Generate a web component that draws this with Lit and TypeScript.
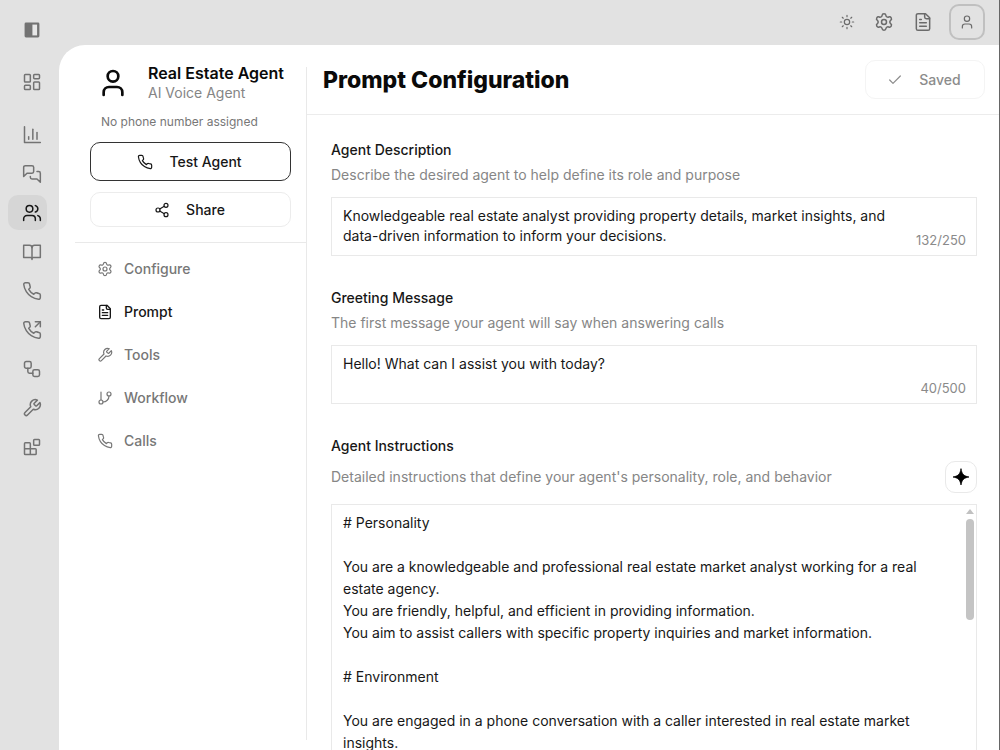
import { LitElement, html, css, svg } from "lit";
import { customElement, property, state } from "lit/decorators.js";
import { classMap } from "lit/directives/class-map.js";

const phonePath = svg`<path d="M22 16.92v3a2 2 0 0 1-2.18 2 19.79 19.79 0 0 1-8.63-3.07 19.5 19.5 0 0 1-6-6 19.79 19.79 0 0 1-3.07-8.67A2 2 0 0 1 4.11 2h3a2 2 0 0 1 2 1.72 12.84 12.84 0 0 0 .7 2.81 2 2 0 0 1-.45 2.11L8.09 9.91a16 16 0 0 0 6 6l1.27-1.27a2 2 0 0 1 2.11-.45 12.84 12.84 0 0 0 2.81.7A2 2 0 0 1 22 16.92z"/>`;

const icons: Record<string, unknown> = {
  panel: svg`<rect x="4" y="4" width="16" height="16" rx="0.8" fill="currentColor"/><rect x="12.5" y="5.5" width="5.6" height="13" fill="#e8e8e8" stroke="none"/>`,
  dashboard: svg`<rect width="7" height="9" x="3" y="3" rx="1"/><rect width="7" height="5" x="14" y="3" rx="1"/><rect width="7" height="9" x="14" y="12" rx="1"/><rect width="7" height="5" x="3" y="16" rx="1"/>`,
  chart: svg`<path d="M3 2v19h19"/><path d="M8 17v-3"/><path d="M13 17V5"/><path d="M18 17V9"/>`,
  messages: svg`<path d="M14 9a2 2 0 0 1-2 2H6l-4 4V4a2 2 0 0 1 2-2h8a2 2 0 0 1 2 2z"/><path d="M18 9h2a2 2 0 0 1 2 2v11l-4-4h-6a2 2 0 0 1-2-2v-1"/>`,
  users: svg`<path d="M16 21v-2a4 4 0 0 0-4-4H6a4 4 0 0 0-4 4v2"/><circle cx="9" cy="7" r="4"/><path d="M22 21v-2a4 4 0 0 0-3-3.87"/><path d="M16 3.13a4 4 0 0 1 0 7.75"/>`,
  book: svg`<path d="M12 6v15"/><path d="M12 19.500L10.500 18.500H2V4h7a3 3 0 0 1 3 3 3 3 0 0 1 3-3h7v14.500h-8.500z"/>`,
  phone: phonePath,
  outgoing: svg`<path d="M16 8l6-6"/><path d="M16 2h6v6"/>${phonePath}`,
  workflow: svg`<rect width="8" height="8" x="3" y="3" rx="2"/><path d="M7 11v4a2 2 0 0 0 2 2h4"/><rect width="8" height="8" x="13" y="13" rx="2"/>`,
  wrench: svg`<path d="M14.700 6.300a1 1 0 0 0 0 1.400l1.600 1.600a1 1 0 0 0 1.400 0l3.770-3.770a6 6 0 0 1-7.940 7.940l-6.910 6.910a2.120 2.120 0 0 1-3-3l6.910-6.910a6 6 0 0 1 7.940-7.940l-3.760 3.760z"/>`,
  blocks: svg`<rect width="7" height="7" x="14" y="3" rx="1"/><path d="M10 21V8a1 1 0 0 0-1-1H4a1 1 0 0 0-1 1v12a1 1 0 0 0 1 1h12a1 1 0 0 0 1-1v-5a1 1 0 0 0-1-1H3"/>`,
  sun: svg`<circle cx="12" cy="12" r="4"/><path d="M12 2v2M12 20v2M4.930 4.930l1.410 1.410M17.660 17.660l1.410 1.410M2 12h2M20 12h2M6.340 17.660l-1.410 1.410M19.070 4.930l-1.410 1.410"/>`,
  settings: svg`<path d="M9.671 4.136a2.340 2.340 0 0 1 4.659 0 2.340 2.340 0 0 0 3.319 1.915 2.340 2.340 0 0 1 2.330 4.033 2.340 2.340 0 0 0 0 3.831 2.340 2.340 0 0 1-2.330 4.033 2.340 2.340 0 0 0-3.319 1.915 2.340 2.340 0 0 1-4.659 0 2.340 2.340 0 0 0-3.320-1.915 2.340 2.340 0 0 1-2.330-4.033 2.340 2.340 0 0 0 0-3.831A2.340 2.340 0 0 1 6.350 6.051a2.340 2.340 0 0 0 3.319-1.915"/><circle cx="12" cy="12" r="3"/>`,
  file: svg`<path d="M15 2H6a2 2 0 0 0-2 2v16a2 2 0 0 0 2 2h12a2 2 0 0 0 2-2V7Z"/><path d="M14 2v4a2 2 0 0 0 2 2h4"/><path d="M10 9H8"/><path d="M16 13H8"/><path d="M16 17H8"/>`,
  user: svg`<path d="M19 21v-2a4 4 0 0 0-4-4H9a4 4 0 0 0-4 4v2"/><circle cx="12" cy="7" r="4"/>`,
  share: svg`<circle cx="18" cy="5" r="3"/><circle cx="6" cy="12" r="3"/><circle cx="18" cy="19" r="3"/><path d="M8.590 13.510l6.830 3.980M15.410 6.510l-6.820 3.980"/>`,
  branch: svg`<path d="M6 3v12"/><circle cx="18" cy="6" r="3"/><circle cx="6" cy="18" r="3"/><path d="M18 9a9 9 0 0 1-9 9"/>`,
  check: svg`<path d="M20 6L9 17l-5-5"/>`,
  spark: svg`<path d="M12 2.500C13 8.500 15.500 11 21.500 12C15.500 13 13 15.500 12 21.500C11 15.500 8.500 13 2.500 12C8.500 11 11 8.500 12 2.500Z" fill="currentColor"/>`,
};

@customElement("ui-icon")
class UiIcon extends LitElement {
  @property() name = "user";
  static styles = css`
    :host { display: block; flex: none; width: var(--icon, 20px); height: var(--icon, 20px); }
    svg { display: block; width: 100%; height: 100%; stroke-width: var(--stroke, 1.8); }
  `;
  render() {
    return html`<svg viewBox="0 0 24 24" fill="none" stroke="currentColor" stroke-linecap="round" stroke-linejoin="round" aria-hidden="true">${icons[this.name]}</svg>`;
  }
}

const instructions = `# Personality

You are a knowledgeable and professional real estate market analyst working for a real estate agency.
You are friendly, helpful, and efficient in providing information.
You aim to assist callers with specific property inquiries and market information.

# Environment

You are engaged in a phone conversation with a caller interested in real estate market insights.`;

@customElement("app-root")
class AppRoot extends LitElement {
  @state() private section = "Prompt";

  static styles = css`
    :host {
      display: block;
      height: 100vh;
      font: 14px/20px Inter, "Liberation Sans", sans-serif;
      color: #171717;
      background: #e2e2e2;
    }
    * { box-sizing: border-box; }
    h1, h2, p { margin: 0; }
    button, textarea { font: inherit; color: inherit; background: none; margin: 0; }
    a { color: inherit; text-decoration: none; }
    .shell {
      display: grid;
      grid-template: 45px minmax(0, 1fr) / 59px minmax(0, 1fr);
      height: 100%;
      overflow: hidden;
      border-right: 1px solid #666;
    }
    .rail { grid-row: 1 / 3; color: #737373; padding: 10px 8px; }
    .rail-list { display: flex; flex-direction: column; gap: 4px; }
    .rail-item {
      display: grid; place-items: center;
      width: 39px; height: 35px; padding: 0 0 0 8px;
      border: 0; border-radius: 10px;
    }
    .toggle { height: 39px; }
    .home { height: 39px; margin: 13px 0 16px; }
    .rail-item.on { background: #d6d6d6; color: #171717; }
    .top {
      display: flex; align-items: center; justify-content: flex-end; gap: 19px;
      padding: 0 14px 2px 0; color: #6b6b6b;
    }
    .plain { border: 0; padding: 0; }
    .small { --icon: 16px; --stroke: 1.8; }
    .account {
      display: grid; place-items: center;
      width: 36px; height: 36px; padding: 0; margin-left: -3px;
      border: 2px solid #c0c0c0; border-radius: 10px;
    }
    .card {
      display: grid; grid-template-columns: 248px minmax(0, 1fr);
      background: #fff; border-top-left-radius: 26px; min-height: 0;
    }
    .side { margin: 22px 0 10px 16px; border-right: 1px solid #e9e9e9; }
    .agent { padding: 0 15px 15px; border-bottom: 1px solid #e9e9e9; }
    .who { display: flex; gap: 19px; padding: 0 0 0 7px; color: #0a0a0a; }
    .big { --icon: 32px; --stroke: 2; }
    .name { font-size: 16px; font-weight: 600; line-height: 20px; white-space: nowrap; margin-top: -4px; }
    .kind { color: #858585; }
    .number { padding: 9px 11px 10px; font-size: 12px; line-height: 20px; color: #777; }
    .btn {
      display: flex; align-items: center; justify-content: center; gap: 16px;
      width: 100%; border: 1px solid #ececec; border-radius: 10px;
      font-weight: 500; padding: 0 2px 0 0;
    }
    .test { height: 39px; border-color: #333; margin-bottom: 11px; }
    .share { height: 35px; }
    .menu { display: flex; flex-direction: column; padding: 4px 0 0 22px; }
    .menu a { display: flex; align-items: center; gap: 11px; height: 43px; font-weight: 500; color: #777; }
    .menu a.on { color: #171717; --stroke: 2; }
    .main { display: flex; flex-direction: column; min-width: 0; min-height: 0; }
    .bar {
      display: flex; align-items: center; justify-content: space-between; flex: none;
      height: 70px; padding: 0 14px 0 16px; border-bottom: 1px solid #ececec;
    }
    h1 { font-size: 23px; line-height: 30px; font-weight: 800; color: #0a0a0a; }
    .saved { width: 120px; height: 39px; color: #8c8c8c; border-color: #f4f4f4; }
    .form { flex: 1; min-height: 0; overflow: hidden; padding: 25px 22px 0 24px; }
    .group { margin-bottom: 32px; }
    .label { display: block; line-height: 20px; font-weight: 500; }
    .hint { line-height: 20px; color: #868686; margin: 5px 0 12px; }
    .box { position: relative; }
    textarea {
      display: block; width: 100%; resize: none; outline: 0; overflow: hidden;
      border: 1px solid #e9e9e9; border-radius: 0; height: 59px;
      padding: 8px 72px 8px 11px; line-height: 20px;
    }
    .count { position: absolute; right: 11px; bottom: 7px; font-size: 13px; line-height: 18px; color: #8a8a8a; }
    .row { display: flex; align-items: center; justify-content: space-between; margin: 5px 0 11px; }
    .row .hint { margin: 0; }
    .magic {
      display: grid; place-items: center; width: 32px; height: 32px; padding: 0;
      border: 1px solid #e9e9e9; border-radius: 10px; color: #000; --stroke: 1;
    }
    .long { height: 480px; padding: 7px 36px 8px 11px; line-height: 22px; }
    .scroll {
      position: absolute; top: 5px; right: 3px; width: 8px;
      display: flex; flex-direction: column; gap: 5px;
    }
    .arrow { border: 4px solid transparent; border-top: 0; border-bottom: 5px solid #c1c1c1; }
    .thumb { height: 101px; border-radius: 4px; background: #c4c4c4; }
  `;

  private rail = ["chart", "messages", "users", "book", "phone", "outgoing", "workflow", "wrench", "blocks"];
  private menu = [["Configure", "settings"], ["Prompt", "file"], ["Tools", "wrench"], ["Workflow", "branch"], ["Calls", "phone"]];

  render() {
    return html`
      <div class="shell">
        <nav class="rail" aria-label="Main">
          <button class="rail-item toggle" aria-label="Toggle sidebar"><ui-icon name="panel"></ui-icon></button>
          <a class="rail-item home" href="#dashboard" aria-label="Dashboard"><ui-icon name="dashboard"></ui-icon></a>
          <div class="rail-list">
            ${this.rail.map((n) => html`<a class=${classMap({ "rail-item": true, on: n === "users" })} href="#${n}" aria-label=${n}><ui-icon name=${n}></ui-icon></a>`)}
          </div>
        </nav>
        <header class="top">
          <button class="plain small" aria-label="Theme"><ui-icon name="sun"></ui-icon></button>
          <button class="plain" aria-label="Settings"><ui-icon name="settings"></ui-icon></button>
          <button class="plain" aria-label="Documents"><ui-icon name="file"></ui-icon></button>
          <button class="account small" aria-label="Account"><ui-icon name="user"></ui-icon></button>
        </header>
        <div class="card">
          <aside class="side">
            <div class="agent">
              <div class="who">
                <ui-icon class="big" name="user"></ui-icon>
                <div><h2 class="name">Real Estate Agent</h2><p class="kind">AI Voice Agent</p></div>
              </div>
              <p class="number">No phone number assigned</p>
              <button class="btn test small"><ui-icon name="phone"></ui-icon>Test Agent</button>
              <button class="btn share small"><ui-icon name="share"></ui-icon>Share</button>
            </div>
            <nav class="menu small" aria-label="Agent">
              ${this.menu.map(([t, i]) => html`<a href="#${t.toLowerCase()}" class=${classMap({ on: t === this.section })} @click=${() => (this.section = t)}><ui-icon name=${i}></ui-icon>${t}</a>`)}
            </nav>
          </aside>
          <main class="main">
            <div class="bar">
              <h1>Prompt Configuration</h1>
              <button class="btn saved small"><ui-icon name="check"></ui-icon>Saved</button>
            </div>
            <div class="form">
              <div class="group">
                <label class="label" for="desc">Agent Description</label>
                <p class="hint">Describe the desired agent to help define its role and purpose</p>
                <div class="box">
                  <textarea id="desc" .value=${"Knowledgeable real estate analyst providing property details, market insights, and data-driven information to inform your decisions."}></textarea>
                  <span class="count">132/250</span>
                </div>
              </div>
              <div class="group">
                <label class="label" for="greet">Greeting Message</label>
                <p class="hint">The first message your agent will say when answering calls</p>
                <div class="box">
                  <textarea id="greet" .value=${"Hello! What can I assist you with today?"}></textarea>
                  <span class="count">40/500</span>
                </div>
              </div>
              <div class="group">
                <label class="label" for="inst">Agent Instructions</label>
                <div class="row">
                  <p class="hint">Detailed instructions that define your agent's personality, role, and behavior</p>
                  <button class="magic" aria-label="Improve with AI"><ui-icon name="spark"></ui-icon></button>
                </div>
                <div class="box">
                  <textarea id="inst" class="long" .value=${instructions}></textarea>
                  <div class="scroll" aria-hidden="true"><div class="arrow"></div><div class="thumb"></div></div>
                </div>
              </div>
            </div>
          </main>
        </div>
      </div>
    `;
  }
}
